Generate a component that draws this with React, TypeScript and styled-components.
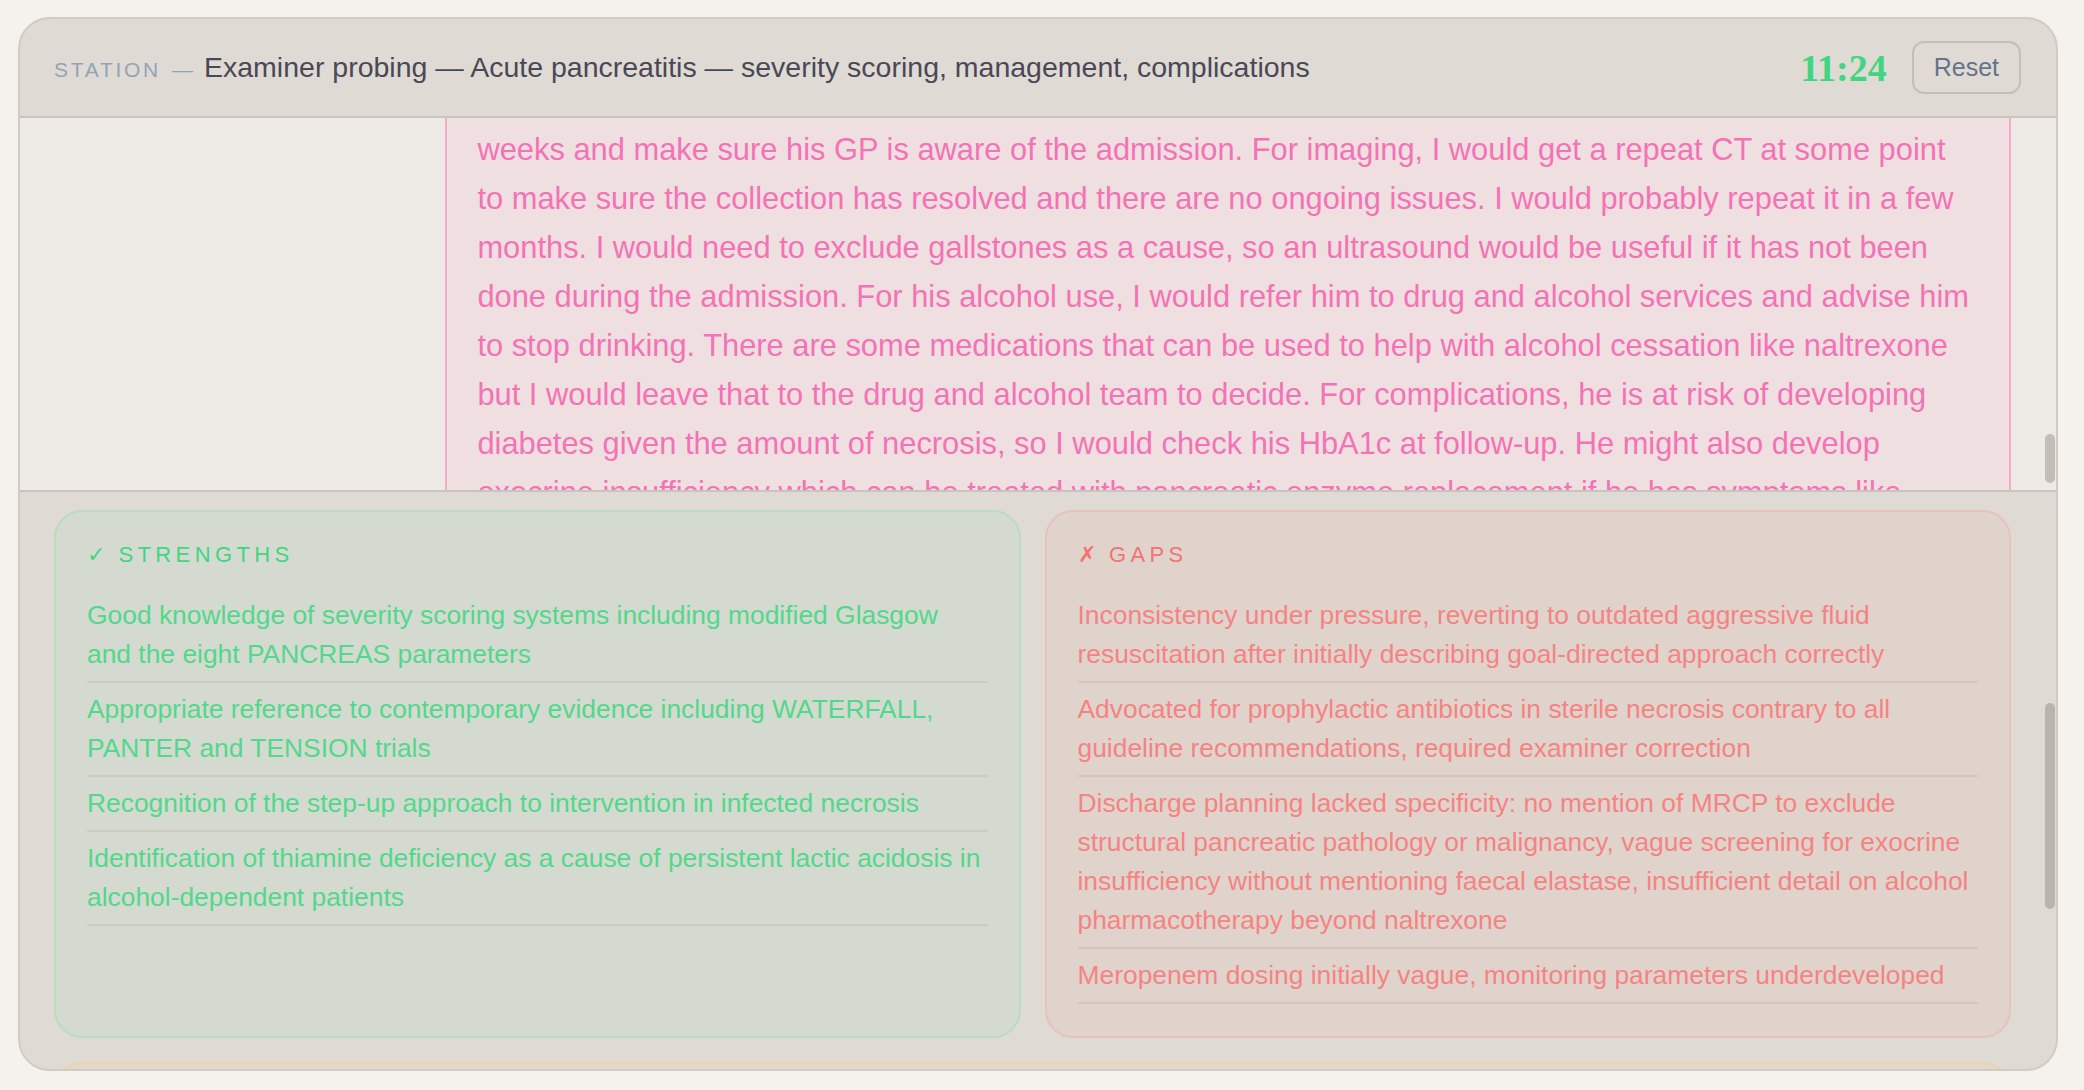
import { useLayoutEffect, useRef, useState } from "react";
import styled, { createGlobalStyle } from "styled-components";

type Tone = "good" | "bad" | "note";

type Message = {
  id: number;
  from: "examiner" | "candidate";
  text: string;
};

type ThumbPos = { top: number; height: number };

const GlobalStyle = createGlobalStyle`
  html, body {
    margin: 0;
    padding: 0;
    background: #f5f2ed;
  }
  body {
    font-family: "Liberation Sans", Arial, Helvetica, sans-serif;
  }
  * {
    box-sizing: border-box;
  }
`;

const tones = {
  good: { bg: "#d5dad0", border: "#b7dcc2", label: "#3fd67f", text: "#52d88a" },
  bad: { bg: "#e0d3cb", border: "#e9c1b9", label: "#f47272", text: "#f58383" },
  note: { bg: "#e2d9cd", border: "#ecd3a8", label: "#e0a64a", text: "#b98a4a" },
};

// ページ全体
const Page = styled.div`
  height: 1090px;
  padding: 17px 26px 19px 18px;
`;

const Shell = styled.div`
  height: 100%;
  display: grid;
  grid-template-rows: 99px minmax(0, 1fr) 579px;
  background: #dfdad4;
  border: 2px solid #d0cbc4;
  border-radius: 32px;
  overflow: hidden;
`;

// ヘッダー
const Header = styled.header`
  display: flex;
  align-items: center;
  justify-content: space-between;
  padding: 0 35px 0 34px;
  border-bottom: 2px solid #c9c4bd;
`;

const Title = styled.div`
  display: flex;
  align-items: baseline;
  gap: 11px;
  white-space: nowrap;
`;

const StationLabel = styled.span`
  font-size: 21px;
  letter-spacing: 0.13em;
  color: #94a3b8;
`;

const StationDash = styled.span`
  font-size: 21px;
  color: #94a3b8;
`;

const StationName = styled.span`
  font-size: 28.5px;
  color: #4a4857;
`;

const Controls = styled.div`
  display: flex;
  align-items: center;
  gap: 25px;
`;

const Timer = styled.span`
  font-family: "Liberation Serif", "DejaVu Serif", serif;
  font-size: 38px;
  font-weight: 700;
  color: #3fd67f;
`;

const ResetButton = styled.button`
  height: 53px;
  padding: 0 20px;
  background: transparent;
  border: 2px solid #c3beb7;
  border-radius: 12px;
  font-family: inherit;
  font-size: 25px;
  color: #64748b;
  cursor: pointer;
`;

// スクロール領域 (つまみは自前で描く)
const ScrollFrame = styled.div<{ $topBorder?: boolean }>`
  position: relative;
  min-height: 0;
  overflow: hidden;
  border-top: ${(p) => (p.$topBorder ? "2px solid #c9c4bd" : "none")};
`;

const Thumb = styled.div<{ $shade: string }>`
  position: absolute;
  right: 1px;
  width: 10px;
  border-radius: 5px;
  background: ${(p) => p.$shade};
`;

// 会話ログ
const Transcript = styled.div`
  height: 100%;
  overflow-y: auto;
  scrollbar-width: none;
  background: #ede9e4;
  padding: 24px 45px 0 34px;
  display: flex;
  flex-direction: column;
  gap: 24px;
`;

const Bubble = styled.div<{ $from: "examiner" | "candidate" }>`
  flex-shrink: 0;
  align-self: ${(p) => (p.$from === "candidate" ? "flex-end" : "flex-start")};
  width: ${(p) => (p.$from === "candidate" ? "80%" : "auto")};
  max-width: 80%;
  padding: 22px 34px 22px 30px;
  border: 2px solid ${(p) => (p.$from === "candidate" ? "#f2aacb" : "#d3cdc5")};
  border-radius: 24px;
  background: ${(p) => (p.$from === "candidate" ? "#efdfe0" : "#e6e1da")};
  color: ${(p) => (p.$from === "candidate" ? "#f472b6" : "#4a4857")};
  font-size: 30.85px;
  line-height: 49px;
`;

// フィードバック
const Review = styled.div`
  height: 100%;
  overflow-y: auto;
  scrollbar-width: none;
  padding: 34px 45px 34px 34px;
  display: flex;
  flex-direction: column;
  gap: 24px;
`;

const Card = styled.section<{ $tone: Tone | "plain" }>`
  flex-shrink: 0;
  background: ${(p) => (p.$tone === "plain" ? "#e4dfd8" : tones[p.$tone].bg)};
  border: 2px solid ${(p) => (p.$tone === "plain" ? "#d0cac2" : tones[p.$tone].border)};
  border-radius: 28px;
  padding: 30px 31px 32px;
`;

const CardLabel = styled.div<{ $tone: Tone | "plain" }>`
  display: flex;
  gap: 9px;
  font-size: 22px;
  line-height: 26px;
  letter-spacing: 0.2em;
  color: ${(p) => (p.$tone === "plain" ? "#94a3b8" : tones[p.$tone].label)};
  margin-bottom: 21px;
`;

const FeedbackGrid = styled.div`
  flex-shrink: 0;
  display: grid;
  grid-template-columns: 1fr 1fr;
  gap: 24px;
`;

const List = styled.ul`
  list-style: none;
  margin: 0;
  padding: 0;
`;

const Item = styled.li<{ $tone: Tone }>`
  padding: 7px 0;
  border-bottom: 2px solid rgba(120, 110, 100, 0.12);
  font-size: 26.4px;
  line-height: 39px;
  color: ${(p) => tones[p.$tone].text};
`;

const ScoreRow = styled.div`
  display: flex;
  align-items: baseline;
  gap: 24px;
  margin-bottom: 30px;
`;

const ScoreValue = styled.span`
  font-family: "Liberation Serif", serif;
  font-size: 64px;
  font-weight: 700;
  color: #4a4857;
`;

const ScoreRating = styled.span`
  font-size: 26px;
  color: #e0a64a;
`;

const DomainRow = styled.div`
  display: grid;
  grid-template-columns: 420px 1fr 70px;
  align-items: center;
  gap: 24px;
  height: 56px;
  font-size: 24px;
  color: #4a4857;
`;

const Track = styled.div`
  height: 12px;
  border-radius: 6px;
  background: #d3cdc5;
  overflow: hidden;
`;

const Fill = styled.div`
  height: 100%;
  border-radius: 6px;
  background: #94a3b8;
`;

const Note = styled.p`
  margin: 0 0 12px;
  font-size: 26px;
  line-height: 39px;
  color: ${tones.note.text};
`;

const messages: Message[] = [
  {
    id: 1,
    from: "examiner",
    text: "This 48 year old man presented with epigastric pain radiating to the back and a lipase of 2400. What are the likely causes?",
  },
  {
    id: 2,
    from: "candidate",
    text: "The commonest causes are gallstones and alcohol, which together account for most cases. Given his history of heavy drinking, alcohol is the most likely cause here, but I would still want to exclude gallstones with an ultrasound. Other causes to consider are hypertriglyceridaemia, hypercalcaemia, drugs such as azathioprine or thiazides, post-ERCP pancreatitis, trauma and, less commonly, autoimmune disease or an underlying tumour. I would check his triglycerides and calcium on admission and review his medication list, and I would ask about any recent weight loss or a family history of pancreatic disease.",
  },
  {
    id: 3,
    from: "examiner",
    text: "How would you assess the severity of this patient's pancreatitis?",
  },
  {
    id: 4,
    from: "candidate",
    text: "I would use a scoring system such as the modified Glasgow score, which uses the PANCREAS mnemonic: PaO2 less than 8 kPa, age over 55, neutrophils above 15, calcium below 2, renal function with urea above 16, enzymes with LDH above 600 or AST above 200, albumin below 32 and sugar with glucose above 10. A score of three or more within 48 hours indicates a severe attack. I would also look at the CRP, where a value above 150 at 48 hours suggests severe disease, and use the revised Atlanta classification to describe organ failure and local complications. At the bedside the BISAP score is quick to calculate in the first 24 hours, using urea, impaired mental status, SIRS, age over 60 and a pleural effusion. Persistent organ failure lasting more than 48 hours is the most important marker of a poor outcome, so I would reassess him regularly rather than relying on a single score taken on admission, and I would have a low threshold for discussing him with critical care.",
  },
  {
    id: 5,
    from: "examiner",
    text: "His urine output has dropped overnight. How would you manage his fluids?",
  },
  {
    id: 6,
    from: "candidate",
    text: "I would give goal-directed fluid resuscitation with Hartmann's solution, aiming for a urine output of at least half a millilitre per kilogram per hour and monitoring his heart rate, blood pressure and lactate. The WATERFALL trial showed that aggressive resuscitation caused more fluid overload without improving outcomes, so I would use a moderate approach. If he continues to deteriorate I would involve critical care early and consider a catheter and an arterial line for closer monitoring.",
  },
  {
    id: 7,
    from: "examiner",
    text: "His CT now shows a collection with gas. What would you do?",
  },
  {
    id: 8,
    from: "candidate",
    text: "This suggests infected necrosis, so I would follow the step-up approach, starting with antibiotics that penetrate pancreatic tissue such as meropenem, then percutaneous or endoscopic drainage, and only moving on to necrosectomy if he does not improve. The PANTER trial showed the step-up approach reduced major complications and death compared to open necrosectomy, and the TENSION trial supported an endoscopic approach. Ideally intervention should be delayed until the collection is walled off, which is usually after around four weeks.",
  },
  {
    id: 9,
    from: "examiner",
    text: "He is now recovering on the ward. How would you plan his discharge and follow-up?",
  },
];

const strengths = [
  "Good knowledge of severity scoring systems including modified Glasgow and the eight PANCREAS parameters",
  "Appropriate reference to contemporary evidence including WATERFALL, PANTER and TENSION trials",
  "Recognition of the step-up approach to intervention in infected necrosis",
  "Identification of thiamine deficiency as a cause of persistent lactic acidosis in alcohol-dependent patients",
];

const gaps = [
  "Inconsistency under pressure, reverting to outdated aggressive fluid resuscitation after initially describing goal-directed approach correctly",
  "Advocated for prophylactic antibiotics in sterile necrosis contrary to all guideline recommendations, required examiner correction",
  "Discharge planning lacked specificity: no mention of MRCP to exclude structural pancreatic pathology or malignancy, vague screening for exocrine insufficiency without mentioning faecal elastase, insufficient detail on alcohol pharmacotherapy beyond naltrexone",
  "Meropenem dosing initially vague, monitoring parameters underdeveloped",
];

const domains = [
  { name: "Severity assessment", score: 4 },
  { name: "Resuscitation", score: 2 },
  { name: "Necrosis and antibiotics", score: 3 },
  { name: "Discharge planning", score: 2 },
  { name: "Evidence base", score: 4 },
  { name: "Communication", score: 4 },
];

// つまみの位置を計算
const measure = (el: HTMLElement): ThumbPos => {
  const ratio = el.clientHeight / el.scrollHeight;
  return {
    top: el.scrollTop * ratio,
    height: el.clientHeight * ratio,
  };
};

const App = () => {
  const transcriptRef = useRef<HTMLDivElement>(null);
  const anchorRef = useRef<HTMLSpanElement>(null);
  const reviewRef = useRef<HTMLDivElement>(null);
  const gridRef = useRef<HTMLDivElement>(null);
  const [transcriptThumb, setTranscriptThumb] = useState<ThumbPos>({ top: 0, height: 0 });
  const [reviewThumb, setReviewThumb] = useState<ThumbPos>({ top: 0, height: 0 });

  // スクロール位置を合わせる
  useLayoutEffect(() => {
    const place = () => {
      const t = transcriptRef.current;
      const a = anchorRef.current;
      if (t && a) {
        const rect = a.getClientRects()[0];
        if (rect) t.scrollTop += rect.top - 132;
        setTranscriptThumb(measure(t));
      }
      const r = reviewRef.current;
      const g = gridRef.current;
      if (r && g) {
        r.scrollTop += g.getBoundingClientRect().top - 510;
        setReviewThumb(measure(r));
      }
    };
    place();
    document.fonts?.ready.then(place);
  }, []);

  return (
    <Page>
      <GlobalStyle />
      <Shell>
        <Header>
          <Title>
            <StationLabel>STATION</StationLabel>
            <StationDash>—</StationDash>
            <StationName>
              Examiner probing — Acute pancreatitis — severity scoring,
              management, complications
            </StationName>
          </Title>
          <Controls>
            <Timer>11:24</Timer>
            <ResetButton>Reset</ResetButton>
          </Controls>
        </Header>

        <ScrollFrame>
          <Transcript
            ref={transcriptRef}
            onScroll={(e) => setTranscriptThumb(measure(e.currentTarget))}
          >
            {messages.map((m) => (
              <Bubble key={m.id} $from={m.from}>
                {m.text}
              </Bubble>
            ))}
            <Bubble $from="candidate">
              Before discharge I would make sure he is tolerating a normal
              diet, his pain is controlled with oral analgesia and his
              inflammatory markers are settling. I would arrange follow-up in
              the pancreatic clinic in around six
              <br />
              <span ref={anchorRef}>
                weeks and make sure his GP is aware of the admission. For
                imaging, I would get a repeat CT at some point to make sure the
                collection has resolved and there are no ongoing issues. I would
                probably repeat it in a few months. I would need to exclude
                gallstones as a cause, so an ultrasound would be useful if it
                has not been done during the admission. For his alcohol use, I
                would refer him to drug and alcohol services and advise him to
                stop drinking. There are some medications that can be used to
                help with alcohol cessation like naltrexone but I would leave
                that to the drug and alcohol team to decide. For complications,
                he is at risk of developing diabetes given the amount of
                necrosis, so I would check his HbA1c at follow-up. He might also
                develop exocrine insufficiency which can be treated with
                pancreatic enzyme replacement if he has symptoms like
              </span>
            </Bubble>
          </Transcript>
          <Thumb
            $shade="#c2beb7"
            style={{ top: transcriptThumb.top, height: transcriptThumb.height }}
          />
        </ScrollFrame>

        <ScrollFrame $topBorder>
          <Review
            ref={reviewRef}
            onScroll={(e) => setReviewThumb(measure(e.currentTarget))}
          >
            <Card $tone="plain">
              <CardLabel $tone="plain">OVERALL</CardLabel>
              <ScoreRow>
                <ScoreValue>13 / 20</ScoreValue>
                <ScoreRating>Borderline pass</ScoreRating>
              </ScoreRow>
              {domains.map((d) => (
                <DomainRow key={d.name}>
                  <span>{d.name}</span>
                  <Track>
                    <Fill style={{ width: `${(d.score / 5) * 100}%` }} />
                  </Track>
                  <span>{d.score} / 5</span>
                </DomainRow>
              ))}
            </Card>

            <FeedbackGrid ref={gridRef}>
              <Card $tone="good">
                <CardLabel $tone="good">
                  <span>✓</span>
                  <span>STRENGTHS</span>
                </CardLabel>
                <List>
                  {strengths.map((s) => (
                    <Item key={s} $tone="good">
                      {s}
                    </Item>
                  ))}
                </List>
              </Card>
              <Card $tone="bad">
                <CardLabel $tone="bad">
                  <span>✗</span>
                  <span>GAPS</span>
                </CardLabel>
                <List>
                  {gaps.map((g) => (
                    <Item key={g} $tone="bad">
                      {g}
                    </Item>
                  ))}
                </List>
              </Card>
            </FeedbackGrid>

            <Card $tone="note">
              <CardLabel $tone="note">
                <span>★</span>
                <span>EXAMINER NOTES</span>
              </CardLabel>
              <Note>
                A solid foundation in the assessment of severity, but the
                candidate needs to hold a consistent line on fluid management
                when challenged and be clear that antibiotics are reserved for
                confirmed or strongly suspected infected necrosis. Under
                pressure the candidate drifted back towards liberal crystalloid
                boluses, which the current evidence does not support.
              </Note>
              <Note>
                Discharge planning should include MRCP or endoscopic ultrasound
                to look for an underlying cause, faecal elastase to screen for
                exocrine insufficiency and a structured plan for alcohol relapse
                prevention, including acamprosate or naltrexone and a named
                community team.
              </Note>
              <Note>
                Meropenem dosing and renal adjustment should be stated without
                prompting, along with the parameters that would show a response:
                temperature, inflammatory markers, organ support and repeat
                imaging of the collection.
              </Note>
            </Card>
          </Review>
          <Thumb
            $shade="#b8b4ae"
            style={{ top: reviewThumb.top, height: reviewThumb.height }}
          />
        </ScrollFrame>
      </Shell>
    </Page>
  );
};

export default App;
